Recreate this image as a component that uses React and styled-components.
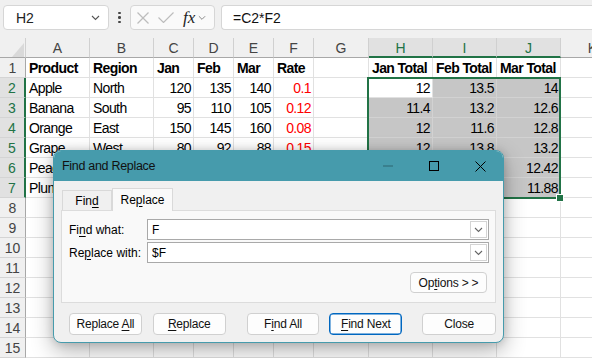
import React from 'react';
import styled, { createGlobalStyle } from 'styled-components';

const GREEN = '#217346';
const TEAL = '#469bac';

const GlobalStyle = createGlobalStyle`
  html, body { margin: 0; padding: 0; background: #fff; }
  body {
    width: 592px;
    height: 358px;
    overflow: hidden;
    font-family: "Liberation Sans", Arial, sans-serif;
  }
  * { box-sizing: border-box; }
`;

const Screen = styled.div`
  position: relative;
  width: 592px;
  height: 358px;
  overflow: hidden;
  background: #fff;
`;

/* ---------- formula bar ---------- */

const FormulaBar = styled.div`
  display: flex;
  align-items: stretch;
  height: 38px;
  padding: 5px 0 8px 3px;
  background: #f0f0f0;
`;

const NameBox = styled.div`
  width: 106px;
  display: flex;
  align-items: center;
  justify-content: space-between;
  padding: 0 8px 0 12px;
  background: #fff;
  border: 1px solid #d6d6d6;
  border-radius: 4px;
  font-size: 14px;
  color: #222;
`;

const Dots = styled.div`
  width: 21px;
  display: flex;
  flex-direction: column;
  align-items: center;
  justify-content: center;
  gap: 2px;

  span {
    width: 2.5px;
    height: 2.5px;
    border-radius: 50%;
    background: #444;
  }
`;

const FxBox = styled.div`
  width: 85px;
  display: flex;
  align-items: center;
  gap: 9px;
  padding-left: 6px;
  background: #fafafa;
  border: 1px solid #d6d6d6;
  border-radius: 4px;
`;

const Fx = styled.span`
  font-family: "Liberation Serif", "Times New Roman", serif;
  font-style: italic;
  font-size: 17px;
  color: #222;
  display: flex;
  align-items: center;
  gap: 3px;
`;

const FormulaInput = styled.div`
  flex: 1;
  margin-left: 6px;
  display: flex;
  align-items: center;
  padding-left: 11px;
  background: #fff;
  border: 1px solid #d6d6d6;
  border-right: none;
  border-radius: 4px 0 0 4px;
  font-size: 14px;
  color: #111;
`;

/* ---------- sheet ---------- */

const SheetWrap = styled.div`
  position: relative;
`;

const Grid = styled.div`
  display: grid;
  grid-template-columns: 26px 64px 64px 40px 40px 40px 40px 55px 64px 64px 64px 64px;
  grid-auto-rows: 20px;
  font-size: 14px;
`;

const Corner = styled.div`
  position: relative;
  background: #f0f0f0;
  border-right: 1px solid #d0d0d0;
  border-bottom: 1px solid #a8a8a8;

  svg { position: absolute; left: 0; top: 0; }
`;

const ColHead = styled.div`
  display: flex;
  align-items: center;
  justify-content: center;
  background: ${p => (p.$selected ? '#e1e1e1' : '#f0f0f0')};
  color: ${p => (p.$selected ? GREEN : '#444')};
  border-right: 1px solid #d0d0d0;
  border-bottom: ${p => (p.$selected ? `2px solid ${GREEN}` : '1px solid #a8a8a8')};
  padding-top: ${p => (p.$selected ? 1 : 0)}px;
`;

const RowHead = styled.div`
  display: flex;
  align-items: center;
  justify-content: center;
  background: ${p => (p.$selected ? '#e1e1e1' : '#f0f0f0')};
  color: ${p => (p.$selected ? GREEN : '#444')};
  border-right: ${p => (p.$selected ? `2px solid ${GREEN}` : '1px solid #a8a8a8')};
  border-bottom: 1px solid #d4d4d4;
`;

const Cell = styled.div`
  display: flex;
  align-items: center;
  justify-content: ${p => (p.$num ? 'flex-end' : 'flex-start')};
  padding: ${p => (p.$num ? '0 2px 0 0' : '0 0 0 3px')};
  white-space: nowrap;
  letter-spacing: -0.6px;
  font-weight: ${p => (p.$bold ? 700 : 400)};
  color: ${p => (p.$red ? '#ff0000' : '#000')};
  background: ${p => (p.$sel ? '#c6c6c6' : '#fff')};
  border-right: 1px solid ${p => (p.$sel ? '#d2d2d2' : '#e1e1e1')};
  border-bottom: 1px solid ${p => (p.$sel ? '#d2d2d2' : '#e1e1e1')};
`;

const Selection = styled.div`
  position: absolute;
  left: 367px;
  top: 39px;
  width: 194px;
  height: 122px;
  border: 2px solid ${GREEN};
  pointer-events: none;
`;

const FillHandle = styled.div`
  position: absolute;
  left: 556px;
  top: 156px;
  width: 8px;
  height: 8px;
  background: ${GREEN};
  border: 1px solid #fff;
`;

/* ---------- dialog ---------- */

const Dialog = styled.div`
  position: absolute;
  left: 53px;
  top: 150px;
  width: 451px;
  height: 193px;
  display: flex;
  flex-direction: column;
  background: #f0f0f0;
  border: 1px solid ${TEAL};
  border-radius: 8px;
  overflow: hidden;
  box-shadow: 0 8px 22px rgba(0, 0, 0, 0.3), 0 0 8px rgba(0, 0, 0, 0.14);
  font-size: 12px;
  color: #000;
`;

const TitleBar = styled.div`
  height: 30px;
  display: flex;
  align-items: center;
  background: ${TEAL};
`;

const Title = styled.div`
  flex: 1;
  padding-left: 8px;
  font-size: 12.5px;
  letter-spacing: -0.3px;
  color: #111;
`;

const WinButton = styled.div`
  width: 46px;
  height: 30px;
  display: flex;
  align-items: center;
  justify-content: center;
`;

const DialogBody = styled.div`
  flex: 1;
  padding: 7px 7px 0;
  display: flex;
  flex-direction: column;
`;

const Tabs = styled.div`
  display: flex;
  align-items: flex-end;
  height: 22px;
  padding-left: 1px;
  position: relative;
  z-index: 1;
`;

const Tab = styled.div`
  display: flex;
  align-items: center;
  justify-content: center;
  width: ${p => p.$w}px;
  height: ${p => (p.$active ? 23 : 20)}px;
  margin-bottom: ${p => (p.$active ? -1 : 0)}px;
  padding-bottom: ${p => (p.$active ? 1 : 0)}px;
  background: ${p => (p.$active ? '#f9f9f9' : '#f0f0f0')};
  border: 1px solid #d9d9d9;
  border-bottom: none;
`;

const Panel = styled.div`
  height: 93px;
  display: flex;
  flex-direction: column;
  padding: 8px 6px 0 7px;
  background: #f9f9f9;
  border: 1px solid #dcdcdc;
`;

const Field = styled.div`
  display: flex;
  align-items: center;
  height: 21px;
  margin-bottom: 2px;
`;

const Label = styled.div`
  width: 78px;
`;

const Input = styled.div`
  flex: 1;
  height: 21px;
  display: flex;
  align-items: center;
  justify-content: space-between;
  padding: 0 1px 0 4px;
  background: #fff;
  border: 1px solid #a9a9a9;
`;

const DropButton = styled.div`
  width: 17px;
  height: 17px;
  display: flex;
  align-items: center;
  justify-content: center;
  border: 1px solid #d4d4d4;
  background: #fff;
`;

const OptionsRow = styled.div`
  display: flex;
  justify-content: flex-end;
  padding-right: 2px;
  margin-top: 7px;
`;

const Button = styled.div`
  width: ${p => p.$w || 73}px;
  height: ${p => p.$h || 22}px;
  margin-left: ${p => p.$gap || 0}px;
  display: flex;
  align-items: center;
  justify-content: center;
  background: #fdfdfd;
  border: 1px solid ${p => (p.$default ? '#0067c0' : '#d0d0d0')};
  box-shadow: ${p => (p.$default ? 'inset 0 0 0 0.5px #0067c0' : 'none')};
  border-radius: 4px;
  letter-spacing: -0.2px;
  color: #111;
  white-space: pre;
`;

const ButtonRow = styled.div`
  display: flex;
  padding: 10px 0 0 8px;
`;

const Key = styled.span`
  text-decoration: underline;
  text-underline-offset: 2px;
`;

/* ---------- data ---------- */

const letters = ['A', 'B', 'C', 'D', 'E', 'F', 'G', 'H', 'I', 'J', 'K'];

const rows = [
  ['Product', 'Region', 'Jan', 'Feb', 'Mar', 'Rate', '', 'Jan Total', 'Feb Total', 'Mar Total', ''],
  ['Apple', 'North', '120', '135', '140', '0.1', '', '12', '13.5', '14', ''],
  ['Banana', 'South', '95', '110', '105', '0.12', '', '11.4', '13.2', '12.6', ''],
  ['Orange', 'East', '150', '145', '160', '0.08', '', '12', '11.6', '12.8', ''],
  ['Grape', 'West', '80', '92', '88', '0.15', '', '12', '13.8', '13.2', ''],
  ['Peach', 'North', '110', '125', '138', '0.09', '', '9.9', '11.25', '12.42', ''],
  ['Plum', 'South', '100', '96', '108', '0.11', '', '11', '10.56', '11.88', ''],
];
while (rows.length < 15) rows.push(Array(11).fill(''));

const isSelected = (r, c) => r >= 1 && r <= 6 && c >= 7 && c <= 9;
const isNumber = v => v !== '' && !isNaN(Number(v));

const Chevron = ({ color = '#555', w = 9 }) => (
  <svg width={w} height="6" viewBox="0 0 9 6">
    <polyline points="1,1 4.5,4.5 8,1" fill="none" stroke={color} strokeWidth="1.1" />
  </svg>
);

function Sheet() {
  return (
    <SheetWrap>
      <Grid>
        <Corner>
          <svg width="26" height="20">
            <polygon points="12,19 24,19 24,5" fill="#d9d9d9" />
          </svg>
        </Corner>
        {letters.map((l, c) => (
          <ColHead key={l} $selected={c >= 7 && c <= 9}>{l}</ColHead>
        ))}
        {rows.map((row, r) => (
          <React.Fragment key={r}>
            <RowHead $selected={r >= 1 && r <= 6}>{r + 1}</RowHead>
            {row.map((v, c) => {
              const sel = isSelected(r, c) && !(r === 1 && c === 7);
              return (
                <Cell
                  key={c}
                  $num={isNumber(v)}
                  $bold={r === 0}
                  $red={c === 5 && r > 0}
                  $sel={sel}
                >
                  {v}
                </Cell>
              );
            })}
          </React.Fragment>
        ))}
      </Grid>
      <Selection />
      <FillHandle />
    </SheetWrap>
  );
}

function FindReplaceDialog() {
  return (
    <Dialog>
      <TitleBar>
        <Title>Find and Replace</Title>
        <WinButton>
          <svg width="10" height="2"><line x1="0" y1="1" x2="10" y2="1" stroke="rgba(0,0,0,0.35)" strokeWidth="1" /></svg>
        </WinButton>
        <WinButton>
          <svg width="10" height="10"><rect x="0.5" y="0.5" width="9" height="9" fill="none" stroke="#000" strokeWidth="1" /></svg>
        </WinButton>
        <WinButton>
          <svg width="11" height="11">
            <line x1="0.5" y1="0.5" x2="10.5" y2="10.5" stroke="#000" strokeWidth="1" />
            <line x1="10.5" y1="0.5" x2="0.5" y2="10.5" stroke="#000" strokeWidth="1" />
          </svg>
        </WinButton>
      </TitleBar>
      <DialogBody>
        <Tabs>
          <Tab $w={50}><span>Fin<Key>d</Key></span></Tab>
          <Tab $w={61} $active><span>Re<Key>p</Key>lace</span></Tab>
        </Tabs>
        <Panel>
          <Field>
            <Label>Fi<Key>n</Key>d what:</Label>
            <Input>
              <span>F</span>
              <DropButton><Chevron color="#666" /></DropButton>
            </Input>
          </Field>
          <Field>
            <Label>Re<Key>p</Key>lace with:</Label>
            <Input>
              <span>$F</span>
              <DropButton><Chevron color="#666" /></DropButton>
            </Input>
          </Field>
          <OptionsRow>
            <Button $w={77} $h={21}><span>Op<Key>t</Key>ions &gt; &gt;</span></Button>
          </OptionsRow>
        </Panel>
        <ButtonRow>
          <Button><span>Replace <Key>A</Key>ll</span></Button>
          <Button $gap={11}><span><Key>R</Key>eplace</span></Button>
          <Button $gap={21}><span>F<Key>i</Key>nd All</span></Button>
          <Button $gap={10} $default><span><Key>F</Key>ind Next</span></Button>
          <Button $gap={20} $w={74}><span>Close</span></Button>
        </ButtonRow>
      </DialogBody>
    </Dialog>
  );
}

export default function App() {
  return (
    <Screen>
      <GlobalStyle />
      <FormulaBar>
        <NameBox>
          <span>H2</span>
          <Chevron />
        </NameBox>
        <Dots><span /><span /><span /></Dots>
        <FxBox>
          <svg width="12" height="12">
            <line x1="0.5" y1="0.5" x2="11.5" y2="11.5" stroke="#bdbdbd" strokeWidth="1.2" />
            <line x1="11.5" y1="0.5" x2="0.5" y2="11.5" stroke="#bdbdbd" strokeWidth="1.2" />
          </svg>
          <svg width="16" height="11">
            <polyline points="0.5,5.5 5.5,10.5 15.5,0.5" fill="none" stroke="#bdbdbd" strokeWidth="1.2" />
          </svg>
          <Fx>
            fx
            <Chevron color="#888" w={8} />
          </Fx>
        </FxBox>
        <FormulaInput>=C2*F2</FormulaInput>
      </FormulaBar>
      <Sheet />
      <FindReplaceDialog />
    </Screen>
  );
}
